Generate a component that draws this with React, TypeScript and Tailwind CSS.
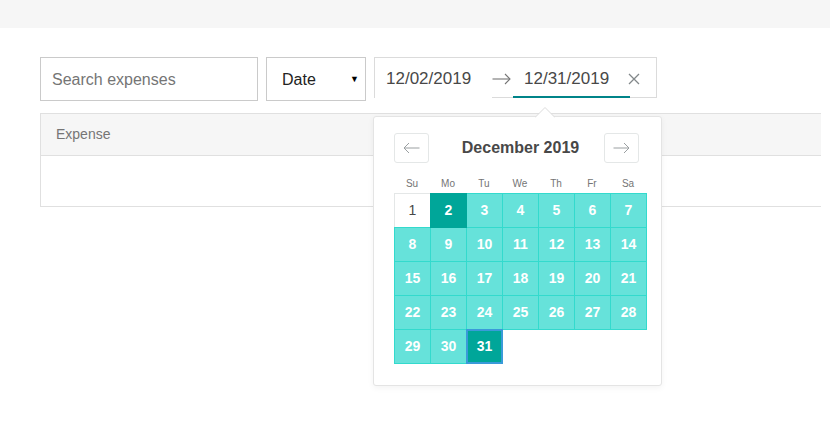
import React from "react";

const weekdays = ["Su", "Mo", "Tu", "We", "Th", "Fr", "Sa"];

function DayCell({ d }: { d: number }) {
  let cls = "";
  if (d === 1) cls = "bg-white border border-[#e4e7e7] text-[#484848] z-0";
  else if (d === 2) cls = "bg-[#00a699] border border-[#00a699] text-white font-bold z-10";
  else if (d === 31) cls = "bg-[#00a699] border-2 border-[#3a9ad9] text-white font-bold z-20";
  else cls = "bg-[#66e2da] border border-[#33dacd] text-white font-bold z-0";
  return (
    <div
      className={`relative -ml-px -mt-px w-[37px] h-[35px] flex items-center justify-center text-[14px] ${cls}`}
    >
      {d}
    </div>
  );
}

function ArrowRight({ color, w = 19, sw = 1.2 }: { color: string; w?: number; sw?: number }) {
  return (
    <svg width={w} height="12" viewBox={`0 0 ${w} 12`} fill="none">
      <path d={`M0.5 6 H${w - 1}`} stroke={color} strokeWidth={sw} />
      <path d={`M${w - 6} 1 L${w - 1} 6 L${w - 6} 11`} stroke={color} strokeWidth={sw} />
    </svg>
  );
}

function ArrowLeft({ color }: { color: string }) {
  return (
    <svg width="17" height="12" viewBox="0 0 17 12" fill="none">
      <path d="M16.5 6 H1" stroke={color} strokeWidth="1" />
      <path d="M6 1 L1 6 L6 11" stroke={color} strokeWidth="1" />
    </svg>
  );
}

export default function App() {
  const rows: (number | null)[][] = [];
  const days: (number | null)[] = [];
  for (let i = 1; i <= 31; i++) days.push(i);
  while (days.length % 7) days.push(null);
  for (let i = 0; i < days.length; i += 7) rows.push(days.slice(i, i + 7));

  return (
    <div className="w-full min-h-[422px] bg-white font-['Liberation_Sans',Arial,sans-serif]">
      <div className="h-[28px] bg-[#f6f6f6]" />
      <div className="pl-[40px] pt-[29px]">
        <div className="flex gap-[8px] items-start">
          <div className="w-[218px] h-[44px] border border-[#cacaca] flex items-center pl-[11px] pt-[1px] text-[16px] text-[#757575]">
            Search expenses
          </div>
          <div className="w-[100px] h-[44px] border border-[#cacaca] flex items-center justify-between pl-[15px] pr-[6px] pt-[1px] text-[16px] text-[#222]">
            <span>Date</span>
            <span className="text-[9px] text-black">▼</span>
          </div>
          <div className="relative w-[283px] h-[41px] border-t border-x border-[#dbdbdb] flex">
            <div className="w-[117px] h-[40px] flex items-center pl-[11px] pt-[2px] text-[17px] text-[#484848]">
              12/02/2019
            </div>
            <div className="w-[21px] h-[40px] border-b border-[#dbdbdb] flex items-center pt-[2px]">
              <ArrowRight color="#757575" sw={1.1} />
            </div>
            <div className="w-[117px] h-[40px] border-b-2 border-[#008489] flex items-center pl-[11px] pt-[3px] text-[17px] text-[#484848]">
              12/31/2019
            </div>
            <div className="flex-1 h-[40px] border-b border-[#dbdbdb] flex items-center pt-[2px]">
              <svg width="12" height="12" viewBox="0 0 12 12" className="-ml-[2px]" fill="none">
                <path d="M1 1 L11 11 M11 1 L1 11" stroke="#82888a" strokeWidth="1.3" />
              </svg>
            </div>

            {/* popup */}
            <div className="absolute left-[-2px] top-[58px] z-30 w-[289px] h-[270px] bg-white rounded-[3px] border border-[#e4e4e4] shadow-[0_2px_6px_rgba(0,0,0,0.05)]">
              <svg
                className="absolute left-[161px] top-[-10px]"
                width="20"
                height="11"
                viewBox="0 0 20 11"
              >
                <path d="M0 10.5 L10 0.5 L20 10.5 Z" fill="#fff" />
                <path d="M0 10.5 L10 0.5 L20 10.5" fill="none" stroke="#dbdbdb" />
              </svg>
              <div className="pl-[20px] pt-[16px]">
                <div className="relative w-[253px] h-[30px] flex justify-between pr-[8px]">
                  <div className="absolute inset-0 flex items-center justify-center text-[16px] font-bold text-[#484848]">
                    December 2019
                  </div>
                  <div className="relative w-[35px] h-[30px] border border-[#e4e7e7] rounded-[3px] flex items-center justify-center">
                    <ArrowLeft color="#9a9fa1" />
                  </div>
                  <div className="relative w-[35px] h-[30px] border border-[#e4e7e7] rounded-[3px] flex items-center justify-center">
                    <ArrowRight color="#9a9fa1" w={17} sw={1} />
                  </div>
                </div>
                <div className="flex mt-[13px] h-[14px] items-center">
                  {weekdays.map((w) => (
                    <div key={w} className="w-[36px] text-center text-[10px] text-[#757575]">
                      {w}
                    </div>
                  ))}
                </div>
                <div className="mt-[3px] pl-px pt-px">
                  {rows.map((r, i) => (
                    <div key={i} className="flex">
                      {r.map((d, j) =>
                        d ? (
                          <DayCell key={j} d={d} />
                        ) : (
                          <div key={j} className="-ml-px -mt-px w-[37px] h-[35px]" />
                        )
                      )}
                    </div>
                  ))}
                </div>
              </div>
            </div>
          </div>
        </div>

        <div className="mt-[12px] w-[781px] border-l border-t border-b border-[#e0e0e0]">
          <div className="h-[42px] bg-[#f6f6f6] border-b border-[#e0e0e0] flex items-center pl-[15px] text-[14px] text-[#757575]">
            Expense
          </div>
          <div className="h-[50px] bg-white" />
        </div>
      </div>
    </div>
  );
}
